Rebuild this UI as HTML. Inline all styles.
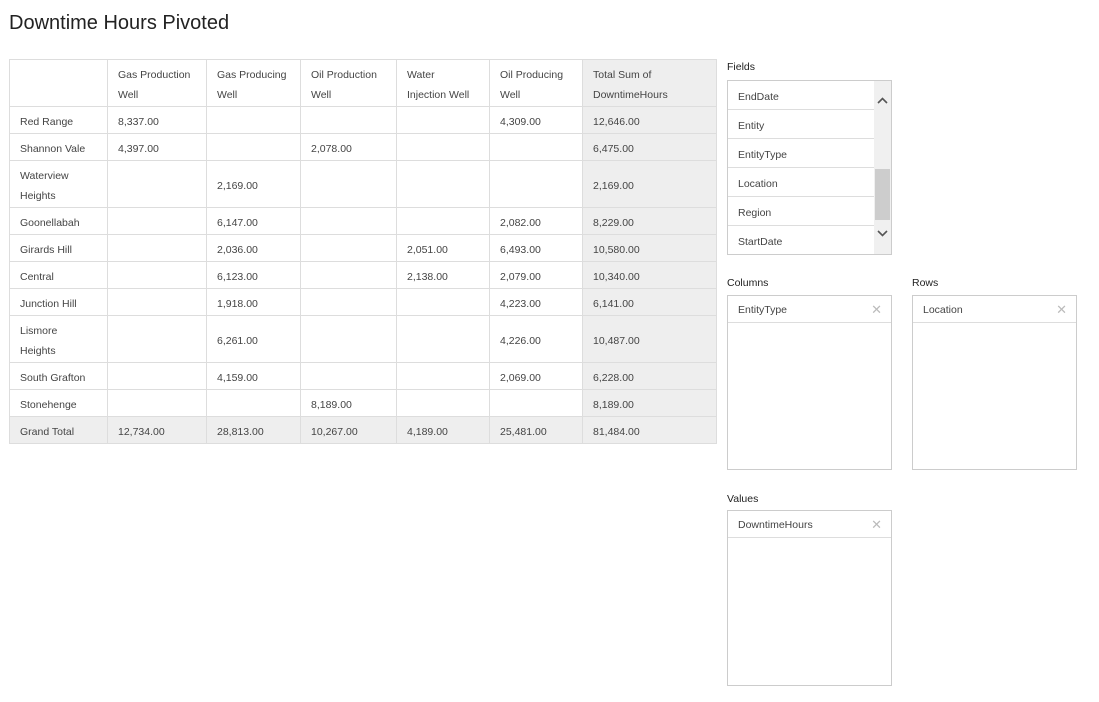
<!DOCTYPE html>
<html><head><style>
body{margin:0;background:#fff;font-family:"Segoe UI","Liberation Sans",sans-serif;color:#333;width:1099px;height:702px;overflow:hidden;position:relative}
h1{position:absolute;left:9px;top:12px;margin:0;font-weight:normal;font-size:20px;color:#222}
table{position:absolute;left:9px;top:59px;border-collapse:collapse;font-size:10.5px}
td{border:1px solid #ddd;padding:3px 10px 0;line-height:20px;vertical-align:middle;color:#444}
.t{background:#eeeeee}
.lbl{position:absolute;font-size:10.5px;color:#222}
.box{position:absolute;border:1px solid #ccc;background:#fff;font-size:10.5px;color:#444}
.it{height:28px;line-height:32px;padding-left:10px;border-bottom:1px solid #ddd;position:relative}
.x{position:absolute;right:9px;top:0;color:#bbb;font-size:13px}
</style></head><body>
<h1>Downtime Hours Pivoted</h1>
<table>
<tr style="height:47px"><td style="width:77px"></td><td style="width:78px">Gas Production<br>Well</td><td style="width:73px">Gas Producing<br>Well</td><td style="width:75px">Oil Production<br>Well</td><td style="width:72px">Water<br>Injection Well</td><td style="width:72px">Oil Producing<br>Well</td><td class="t" style="width:113px">Total Sum of<br>DowntimeHours</td></tr>
<tr style="height:27px"><td>Red Range</td><td>8,337.00</td><td></td><td></td><td></td><td>4,309.00</td><td class="t">12,646.00</td></tr>
<tr style="height:27px"><td>Shannon Vale</td><td>4,397.00</td><td></td><td>2,078.00</td><td></td><td></td><td class="t">6,475.00</td></tr>
<tr style="height:47px"><td>Waterview<br>Heights</td><td></td><td>2,169.00</td><td></td><td></td><td></td><td class="t">2,169.00</td></tr>
<tr style="height:27px"><td>Goonellabah</td><td></td><td>6,147.00</td><td></td><td></td><td>2,082.00</td><td class="t">8,229.00</td></tr>
<tr style="height:27px"><td>Girards Hill</td><td></td><td>2,036.00</td><td></td><td>2,051.00</td><td>6,493.00</td><td class="t">10,580.00</td></tr>
<tr style="height:27px"><td>Central</td><td></td><td>6,123.00</td><td></td><td>2,138.00</td><td>2,079.00</td><td class="t">10,340.00</td></tr>
<tr style="height:27px"><td>Junction Hill</td><td></td><td>1,918.00</td><td></td><td></td><td>4,223.00</td><td class="t">6,141.00</td></tr>
<tr style="height:47px"><td>Lismore<br>Heights</td><td></td><td>6,261.00</td><td></td><td></td><td>4,226.00</td><td class="t">10,487.00</td></tr>
<tr style="height:27px"><td>South Grafton</td><td></td><td>4,159.00</td><td></td><td></td><td>2,069.00</td><td class="t">6,228.00</td></tr>
<tr style="height:27px"><td>Stonehenge</td><td></td><td></td><td>8,189.00</td><td></td><td></td><td class="t">8,189.00</td></tr>
<tr style="height:27px" class="t"><td>Grand Total</td><td>12,734.00</td><td>28,813.00</td><td>10,267.00</td><td>4,189.00</td><td>25,481.00</td><td>81,484.00</td></tr>
</table>

<div class="lbl" style="left:727px;top:61px">Fields</div>
<div class="box" style="left:727px;top:80px;width:163px;height:173px;overflow:hidden">
 <div style="position:absolute;left:0;top:0;width:146px">
  <div class="it">EndDate</div>
  <div class="it">Entity</div>
  <div class="it">EntityType</div>
  <div class="it">Location</div>
  <div class="it">Region</div>
  <div class="it" style="border:none">StartDate</div>
 </div>
 <div style="position:absolute;right:0;top:0;width:17px;height:173px;background:#f0f0f0">
  <div style="position:absolute;left:1px;top:88px;width:15px;height:51px;background:#cdcdcd"></div>
  <svg style="position:absolute;left:3px;top:16px" width="11" height="8"><path d="M1 6 L5.5 1.5 L10 6" stroke="#555" stroke-width="1.6" fill="none"/></svg>
  <svg style="position:absolute;left:3px;top:148px" width="11" height="8"><path d="M1 2 L5.5 6.5 L10 2" stroke="#555" stroke-width="1.6" fill="none"/></svg>
 </div>
</div>

<div class="lbl" style="left:727px;top:277px">Columns</div>
<div class="box" style="left:727px;top:295px;width:163px;height:173px"><div class="it" style="height:26px;line-height:28px">EntityType<span class="x" style="line-height:28px">✕</span></div></div>
<div class="lbl" style="left:912px;top:277px">Rows</div>
<div class="box" style="left:912px;top:295px;width:163px;height:173px"><div class="it" style="height:26px;line-height:28px">Location<span class="x" style="line-height:28px">✕</span></div></div>
<div class="lbl" style="left:727px;top:493px">Values</div>
<div class="box" style="left:727px;top:510px;width:163px;height:174px"><div class="it" style="height:26px;line-height:28px">DowntimeHours<span class="x" style="line-height:28px">✕</span></div></div>
</body></html>
